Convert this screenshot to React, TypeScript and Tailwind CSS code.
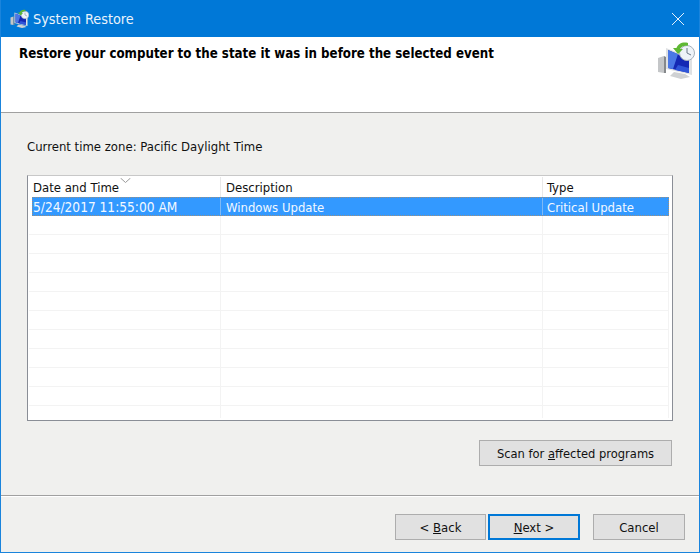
const rows = Array.from({ length: 10 });

function RestoreIcon({ className }: { className: string }) {
  return (
    <svg viewBox="0 0 38 38" className={className}>
      {/* tower */}
      <path d="M1 17 L7 15 L7 32 L1 31 Z" fill="#c4c6c8" />
      <path d="M7 15 L9 16 L9 32 L7 32 Z" fill="#85888b" />
      {/* base */}
      <path d="M17 31 L28 33 L33 36 L24 38 L13 35 Z" fill="#cfd1d3" />
      {/* monitor */}
      <path d="M9 7 L35 17 L35 34 L9 28 Z" fill="#dfe1e3" />
      <path d="M11 9 L32 18 L32 32 L11 27 Z" fill="#1428b4" />
      <path d="M11 9 L21 13 L16 28 L11 27 Z" fill="#4a78e6" />
      <path d="M21 24 L32 27 L32 32 L18 29 Z" fill="#2f55d8" />
      {/* clock */}
      <circle cx="30" cy="12" r="7.5" fill="#eef3f8" stroke="#a6b0bb" />
      <path d="M30 7 L30 12 L34 14" fill="none" stroke="#6a7889" strokeWidth="1" />
      {/* arrow */}
      <path d="M31 2 C26 0.5 21 2.5 19.5 7 L16 7 L21 13 L26 8 L23 8 C24 5.5 27 4.5 31 4.5 Z" fill="#5fb834" />
    </svg>
  );
}

function Btn({ children, primary, wide }: { children: React.ReactNode; primary?: boolean; wide?: boolean }) {
  return (
    <button
      className={`flex items-center justify-center h-[26px] bg-[#e1e1e1] text-[13px] text-[#111] ${
        primary ? "border-2 border-[#0078d7] w-[92px]" : "border border-[#adadad]"
      } ${wide ? "w-[92px]" : "w-[91px]"}`}
    >
      {children}
    </button>
  );
}

export default function App() {
  return (
    <div className="w-[700px] h-[553px] flex flex-col border border-[#1a84dc] border-t-0 bg-[#f0f0ee] text-[#111] font-['DejaVu_Sans_Condensed','DejaVu_Sans',sans-serif] text-[13px] overflow-hidden">
      {/* title bar */}
      <div className="h-[37px] shrink-0 -mx-px bg-[#0078d7] flex items-center pl-[10px] pr-[15px] text-white">
        <RestoreIcon className="w-[19px] h-[19px]" />
        <span className="ml-[4px] pt-[2px] text-[14.3px] text-[#eaf3fb]">System Restore</span>
        <svg viewBox="0 0 14 14" className="w-[14px] h-[14px] ml-auto">
          <path d="M1 1 L13 13 M13 1 L1 13" stroke="#e3effa" strokeWidth="1" fill="none" />
        </svg>
      </div>

      {/* heading */}
      <div className="h-[76px] shrink-0 bg-white border-b border-[#a0a0a0] flex justify-between pl-[18px] pr-[4px]">
        <h1 className="mt-[7px] text-[13.2px] font-bold leading-[20px] text-black">
          Restore your computer to the state it was in before the selected event
        </h1>
        <RestoreIcon className="w-[38px] h-[38px] mt-[4px]" />
      </div>

      {/* content */}
      <div className="flex-1 flex flex-col px-[26px]">
        <p className="mt-[24px] h-[20px] leading-[20px]">Current time zone: Pacific Daylight Time</p>
        <div className="mt-[18px] h-[246px] flex flex-col border border-[#8a8e96] border-t-[#c8c8c8] bg-white px-px">
          <div className="h-[21px] shrink-0 flex items-end leading-[20px]">
            <div className="relative h-[20px] pt-px w-[192px] border-r border-[#e8e8e8] pl-[4px]">
              Date and Time
              <svg viewBox="0 0 11 5" className="absolute left-[91px] top-px w-[11px] h-[5px]">
                <path d="M0.5 0 L5.5 4.5 L10.5 0" fill="none" stroke="#9a9a9a" />
              </svg>
            </div>
            <div className="h-[20px] pt-px w-[322px] border-r border-[#e8e8e8] pl-[5px]">Description</div>
            <div className="h-[20px] pt-px flex-1 pl-[4px]">Type</div>
          </div>
          <div className="h-[19px] shrink-0 flex leading-[21px] bg-[#3399ff] text-[#f2f8ff] ml-[3px] mr-[2px] outline-1 outline-dotted -outline-offset-1 outline-[#9a8f80]">
            <div className="w-[189px] pl-px border-r border-[#7db9f5] whitespace-nowrap text-[13.6px]">5/24/2017 11:55:00 AM</div>
            <div className="w-[322px] pl-[5px] border-r border-[#7db9f5]">Windows Update</div>
            <div className="flex-1 pl-[4px]">Critical Update</div>
          </div>
          {rows.map((_, i) => (
            <div key={i} className="h-[19px] shrink-0 flex border-b border-r border-[#f3f3f3] mr-[2px]">
              <div className="w-[192px] border-r border-[#f3f3f3]" />
              <div className="w-[322px] border-r border-[#f3f3f3]" />
            </div>
          ))}
          <div className="flex-1 flex border-r border-[#f3f3f3] mr-[2px] mb-[2px]">
            <div className="w-[192px] border-r border-[#f3f3f3]" />
            <div className="w-[322px] border-r border-[#f3f3f3]" />
          </div>
        </div>
        <div className="mt-[19px] flex justify-end mr-px">
          <button className="flex items-center justify-center w-[193px] h-[26px] bg-[#e1e1e1] border border-[#adadad]">
            <span className="pt-px text-[12.8px]">
              Scan for <u>a</u>ffected programs
            </span>
          </button>
        </div>
      </div>

      {/* footer */}
      <div className="h-[57px] shrink-0 border-t border-[#a0a0a0] shadow-[inset_0_1px_0_#ffffff] flex items-start justify-end pr-[14px] pt-[18px]">
        <div className="flex gap-[2px]">
          <Btn>
            <span className="pt-px">
              &lt; <u>B</u>ack
            </span>
          </Btn>
          <Btn primary>
            <span className="pt-px">
              <u>N</u>ext &gt;
            </span>
          </Btn>
        </div>
        <div className="ml-[13px]">
          <Btn wide>
            <span className="pt-px">Cancel</span>
          </Btn>
        </div>
      </div>
    </div>
  );
}
